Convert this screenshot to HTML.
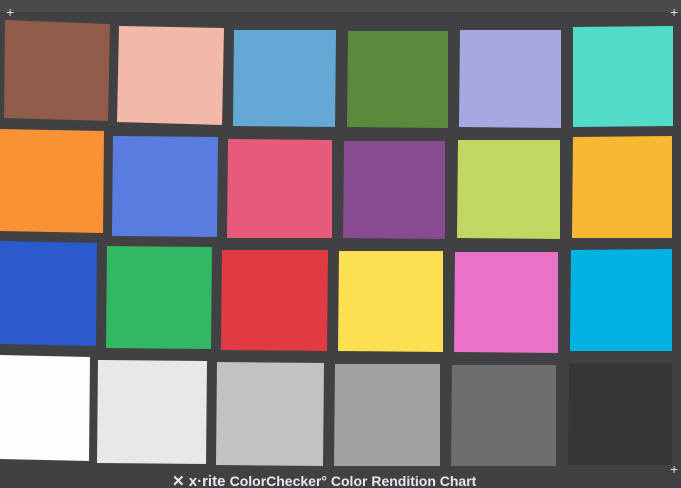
<!DOCTYPE html>
<html><head><style>
html,body{margin:0;padding:0;background:#414143;}
svg{display:block}
</style></head><body>
<svg width="681" height="488" viewBox="0 0 681 488" xmlns="http://www.w3.org/2000/svg">
<rect width="681" height="488" fill="#414143"/>
<rect width="681" height="12" fill="#4a4a4c"/>
<polygon points="5,20 110,24 108,121 4,118" fill="#8e5c48"/>
<polygon points="119,26 224,28 222,125 117,122" fill="#f2b8a8"/>
<polygon points="234,30 336,30 335,127 233,126" fill="#64a8d6"/>
<polygon points="348,31 448,31 448,128 347,127" fill="#5a8a3c"/>
<polygon points="460,30 561,30 561,128 459,127" fill="#a8a8e0"/>
<polygon points="573,27 673,26 673,126 573,127" fill="#52dcc8"/>

<polygon points="0,129 104,131 103,233 0,231" fill="#f89234"/>
<polygon points="113,136 218,137 217,237 112,236" fill="#5a7ce0"/>
<polygon points="228,139 332,140 332,238 227,238" fill="#e85a7a"/>
<polygon points="344,141 445,141 445,239 343,238" fill="#884a90"/>
<polygon points="458,140 560,140 560,239 457,238" fill="#c0d862"/>
<polygon points="573,137 672,136 672,238 572,238" fill="#f8b832"/>

<polygon points="0,241 97,243 96,346 0,344" fill="#2a5acc"/>
<polygon points="107,246 212,247 211,349 106,348" fill="#32b862"/>
<polygon points="222,250 328,250 327,351 221,350" fill="#e03a42"/>
<polygon points="339,251 443,251 443,352 338,351" fill="#fce052"/>
<polygon points="455,252 558,252 558,353 454,352" fill="#e872c8"/>
<polygon points="571,250 672,249 672,351 570,351" fill="#02b2e2"/>

<polygon points="0,355 90,357 89,461 0,459" fill="#fdfdfd"/>
<polygon points="98,360 207,361 206,464 97,463" fill="#e6e8ea"/>
<polygon points="217,362 324,363 323,466 216,465" fill="#c2c2c4"/>
<polygon points="335,364 440,364 440,466 334,466" fill="#a2a2a4"/>
<polygon points="452,365 556,365 556,466 451,466" fill="#6c6e70"/>
<polygon points="569,363 672,363 672,465 568,465" fill="#363638"/>

<text x="6" y="17" fill="#ddd" font-size="14" font-family="Liberation Sans, sans-serif">+</text>
<text x="670" y="17" fill="#ddd" font-size="14" font-family="Liberation Sans, sans-serif">+</text>
<text x="670" y="474" fill="#ddd" font-size="14" font-family="Liberation Sans, sans-serif">+</text>
<text x="172" y="486" fill="#e8e8f0" font-size="15" font-weight="bold" font-family="Liberation Sans, sans-serif">✕ x·rite <tspan font-size="14">ColorChecker° Color Rendition Chart</tspan></text>
</svg>
</body></html>
